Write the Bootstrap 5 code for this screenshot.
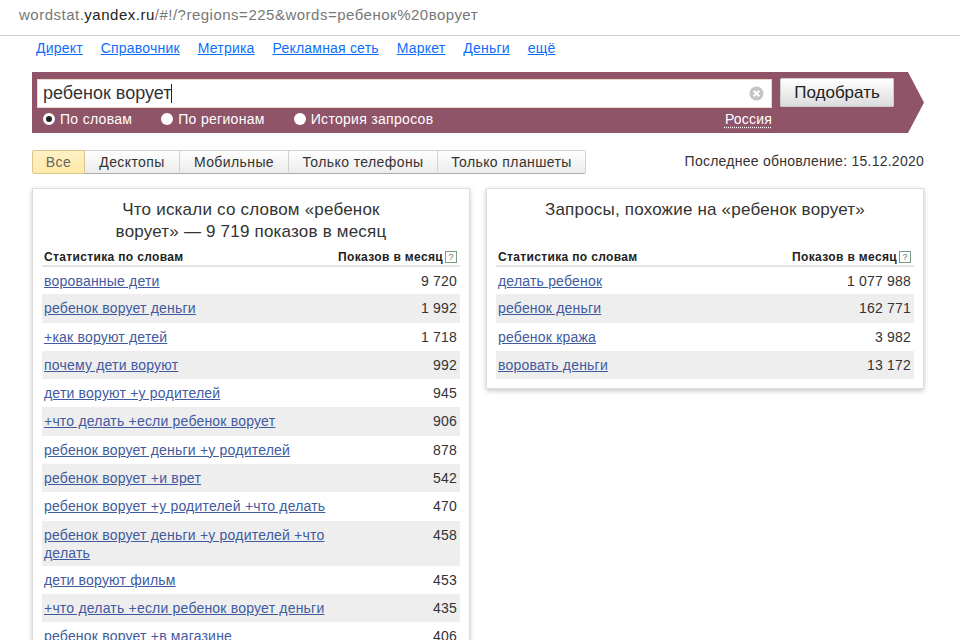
<!DOCTYPE html>
<html lang="ru">
<head>
<meta charset="utf-8">
<title>Wordstat</title>
<link href="https://cdn.jsdelivr.net/npm/bootstrap@5.3.0/dist/css/bootstrap.min.css" rel="stylesheet">
<style>
html,body{height:640px;overflow:hidden;background:#fff;}
body{font-family:"Liberation Sans",Arial,sans-serif;font-size:14px;color:#333;}
a{color:#3f5a9f;}
.url-bar{height:36px;border-bottom:1px solid #cfcfcf;padding:5px 0 0 19px;font-size:15px;line-height:20px;color:#777;letter-spacing:.5px;}
.url-bar b{font-weight:400;color:#222;}
.page-wrap{padding:0 36px 0 32px;}
.top-links{gap:18px;padding:2px 0 0 4px;height:36px;line-height:20px;letter-spacing:.2px;}
.top-links a{padding:0;text-decoration:underline;}
.search-band{height:61px;background:#8f5468;clip-path:polygon(0 0,876px 0,892px 50%,876px 100%,0 100%);padding:7px 30px 0 5px;}
.query-row{gap:8px;align-items:flex-start;}
.query-box{flex:1;height:29px;background:#fff;border:1px solid #e8d9c8;padding:0 7px 0 5px;font-size:18px;line-height:25px;color:#333;}
.caret-mark{display:inline-block;width:1px;height:19px;background:#222;vertical-align:-4px;}
.query-clear{width:15px;height:15px;}
.pick-btn{width:114px;height:29px;padding:0;margin-top:-1px;font-size:17px;line-height:27px;color:#222;border:1px solid #ccc;border-radius:1px;background:linear-gradient(#fff,#dcdcdc);}
.radio-row{height:22px;padding:0 122px 0 6px;color:#fff;line-height:22px;font-size:14px;letter-spacing:.3px;}
.radio-item{gap:5px;}
.radio-item + .radio-item{margin-left:29px;}
.radio-dot{width:12px;height:12px;border-radius:50%;background:#fff;display:inline-block;}
.radio-dot.on{border:3px solid #fff;background:#222;}
.region-link{color:#fff;letter-spacing:.2px;text-decoration:underline dotted;text-underline-offset:3px;}
.tabs-row{margin-top:17px;height:24px;}
.tab-set .btn{height:24px;padding:0;font-size:14px;line-height:21px;letter-spacing:.4px;color:#333;border:1px solid #d2d2d2;border-bottom-color:#aaa;background:linear-gradient(#fff,#ececec);border-radius:2px;}
.tab-set .btn.active{background:linear-gradient(#fff1c4,#ffe9a8);color:#666;border-color:#d8c68c;}
.tw-1{width:53px}.tw-2{width:96px}.tw-3{width:110px}.tw-4{width:150px}.tw-5{width:149px}
.update-note{letter-spacing:.25px;line-height:22px;margin-top:-2px;}
.cards-row{margin-top:14px;gap:16px;align-items:flex-start;}
.stat-card{width:439px;border:1px solid #ddd;border-radius:0;box-shadow:0 2px 5px rgba(0,0,0,.22);padding:10px 9px 9px;}
.stat-title{height:50px;margin:0 0 1px;font-size:17px;line-height:22px;letter-spacing:.2px;font-weight:400;color:#333;text-align:center;padding:0 48px;}
.stat-table{margin:0;width:100%;table-layout:fixed;font-size:14px;letter-spacing:.2px;}
.stat-table th{font-size:12px;font-weight:700;letter-spacing:.35px;color:#222;padding:0 2px 1px;line-height:14px;border-bottom:2px solid #e4e4e4;}
.stat-table th:first-child{width:290px;}
.stat-table td{height:28.3px;padding:5px 2px 4px;line-height:18px;vertical-align:top;border:0;}
.stat-table tr:nth-child(even) td{background:#eee;}
.stat-table td:last-child,.stat-table th:last-child{text-align:right;white-space:nowrap;padding-right:3px;}
.help-mark{display:inline-block;width:12px;height:12px;border:1px solid #7a9a85;font-size:9px;line-height:10px;text-align:center;font-weight:400;color:#5c7d69;margin-left:2px;vertical-align:1px;letter-spacing:0;}
</style>
</head>
<body>
<div class="url-bar">wordstat.<b>yandex.ru</b>/#!/?regions=225&amp;words=ребенок%20ворует</div>
<div class="page-wrap">
  <nav class="nav top-links">
    <a class="nav-link" href="#">Директ</a>
    <a class="nav-link" href="#">Справочник</a>
    <a class="nav-link" href="#">Метрика</a>
    <a class="nav-link" href="#">Рекламная сеть</a>
    <a class="nav-link" href="#">Маркет</a>
    <a class="nav-link" href="#">Деньги</a>
    <a class="nav-link" href="#">ещё</a>
  </nav>
  <div class="search-band">
    <div class="d-flex query-row">
      <div class="query-box d-flex align-items-center justify-content-between">
        <span>ребенок ворует<span class="caret-mark"></span></span>
        <svg class="query-clear" viewBox="0 0 15 15"><circle cx="7.5" cy="7.5" r="7" fill="#c4c4c4"/><path d="M4.7 4.7l5.6 5.6M10.3 4.7l-5.6 5.6" stroke="#fff" stroke-width="2"/></svg>
      </div>
      <button class="btn pick-btn" type="button">Подобрать</button>
    </div>
    <div class="radio-row d-flex">
      <span class="radio-item d-inline-flex align-items-center"><span class="radio-dot on"></span>По словам</span>
      <span class="radio-item d-inline-flex align-items-center"><span class="radio-dot"></span>По регионам</span>
      <span class="radio-item d-inline-flex align-items-center"><span class="radio-dot"></span>История запросов</span>
      <a class="region-link ms-auto" href="#">Россия</a>
    </div>
  </div>
  <div class="tabs-row d-flex justify-content-between align-items-center">
    <div class="btn-group tab-set" role="group">
      <button class="btn active tw-1" type="button">Все</button>
      <button class="btn tw-2" type="button">Десктопы</button>
      <button class="btn tw-3" type="button">Мобильные</button>
      <button class="btn tw-4" type="button">Только телефоны</button>
      <button class="btn tw-5" type="button">Только планшеты</button>
    </div>
    <div class="update-note">Последнее обновление: 15.12.2020</div>
  </div>
  <div class="d-flex cards-row">
    <div class="card stat-card">
      <h2 class="stat-title">Что искали со словом «ребенок ворует» — 9 719 показов в месяц</h2>
      <table class="stat-table">
        <thead><tr><th>Статистика по словам</th><th>Показов в месяц<span class="help-mark">?</span></th></tr></thead>
        <tbody>
          <tr><td><a href="#">ворованные дети</a></td><td>9 720</td></tr>
          <tr><td><a href="#">ребенок ворует деньги</a></td><td>1 992</td></tr>
          <tr><td><a href="#">+как воруют детей</a></td><td>1 718</td></tr>
          <tr><td><a href="#">почему дети воруют</a></td><td>992</td></tr>
          <tr><td><a href="#">дети воруют +у родителей</a></td><td>945</td></tr>
          <tr><td><a href="#">+что делать +если ребенок ворует</a></td><td>906</td></tr>
          <tr><td><a href="#">ребенок ворует деньги +у родителей</a></td><td>878</td></tr>
          <tr><td><a href="#">ребенок ворует +и врет</a></td><td>542</td></tr>
          <tr><td><a href="#">ребенок ворует +у родителей +что делать</a></td><td>470</td></tr>
          <tr><td><a href="#">ребенок ворует деньги +у родителей +что делать</a></td><td>458</td></tr>
          <tr><td><a href="#">дети воруют фильм</a></td><td>453</td></tr>
          <tr><td><a href="#">+что делать +если ребенок ворует деньги</a></td><td>435</td></tr>
          <tr><td><a href="#">ребенок ворует +в магазине</a></td><td>406</td></tr>
        </tbody>
      </table>
    </div>
    <div class="card stat-card">
      <h2 class="stat-title">Запросы, похожие на «ребенок ворует»</h2>
      <table class="stat-table">
        <thead><tr><th>Статистика по словам</th><th>Показов в месяц<span class="help-mark">?</span></th></tr></thead>
        <tbody>
          <tr><td><a href="#">делать ребенок</a></td><td>1 077 988</td></tr>
          <tr><td><a href="#">ребенок деньги</a></td><td>162 771</td></tr>
          <tr><td><a href="#">ребенок кража</a></td><td>3 982</td></tr>
          <tr><td><a href="#">воровать деньги</a></td><td>13 172</td></tr>
        </tbody>
      </table>
    </div>
  </div>
</div>
<script src="https://cdn.jsdelivr.net/npm/bootstrap@5.3.0/dist/js/bootstrap.bundle.min.js"></script>
</body>
</html>
